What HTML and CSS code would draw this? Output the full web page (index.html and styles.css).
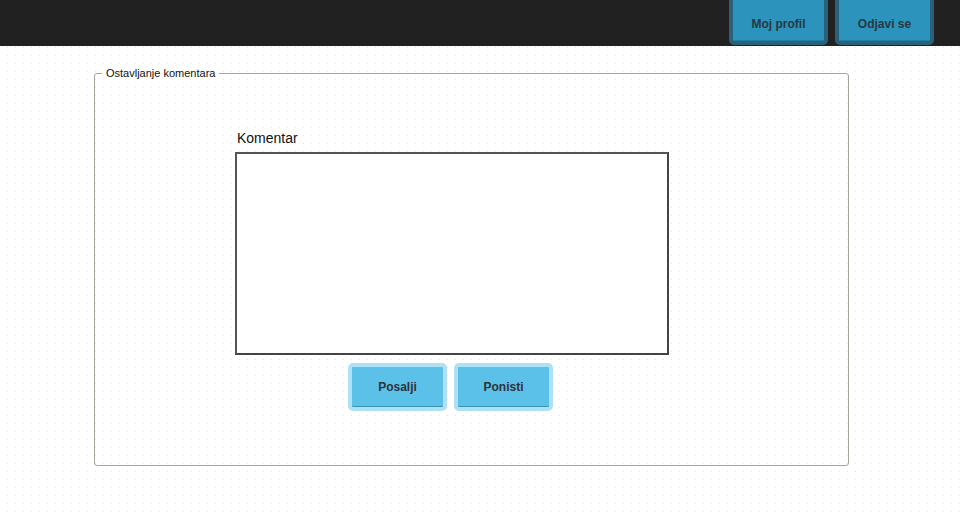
FILE: index.html
```html
<!DOCTYPE html>
<html lang="sr">
<head>
<meta charset="utf-8">
<title>Ostavljanje komentara</title>
<link rel="stylesheet" href="styles.css">
</head>
<body>
<header class="topbar">
  <button class="top-btn">Moj profil</button>
  <button class="top-btn">Odjavi se</button>
</header>
<main class="main">
  <section class="panel">
    <span class="legend">Ostavljanje komentara</span>
    <div class="form">
      <label class="label" for="k">Komentar</label>
      <textarea id="k" class="area"></textarea>
      <div class="actions">
        <button class="act-btn">Posalji</button>
        <button class="act-btn">Ponisti</button>
      </div>
    </div>
  </section>
</main>
</body>
</html>
```
FILE: styles.css
```css
html, body {
  margin: 0;
  padding: 0;
}
body {
  width: 960px;
  height: 516px;
  overflow: hidden;
  font-family: "Liberation Sans", Arial, sans-serif;
  background-color: #fff;
  background-image:
    linear-gradient(to right, #fff 7px, transparent 7px),
    linear-gradient(to bottom, #fff 7px, #e3e3e3 7px);
  background-size: 8px 8px, 8px 8px;
}
.topbar {
  height: 46px;
  background: #212121;
  display: flex;
  justify-content: flex-end;
  align-items: flex-end;
  gap: 7px;
  padding-right: 26px;
  overflow: hidden;
}
.top-btn {
  box-sizing: border-box;
  width: 99px;
  height: 50px;
  margin-bottom: 1px;
  border: 4px solid #2a6178;
  border-radius: 5px;
  background: #2b93bc;
  box-shadow: inset 0 -1px 0 #237ea3;
  color: #273841;
  font-family: "Liberation Sans", Arial, sans-serif;
  font-weight: bold;
  font-size: 12px;
  padding: 8px 0 0;
}
.main {
  padding: 73px 0 0 94px;
  margin-top: -46px;
}
.panel {
  position: relative;
  box-sizing: border-box;
  width: 755px;
  height: 393px;
  border: 1px solid #a7a596;
  border-radius: 3px;
}
.legend {
  position: absolute;
  top: -8px;
  left: 7px;
  padding: 0 4px;
  background: #fff;
  font-family: "Liberation Sans", Arial, sans-serif;
  font-size: 11px;
  line-height: 14px;
  color: #111;
}
.form {
  display: flex;
  flex-direction: column;
  align-items: flex-start;
  padding: 56px 0 0 140px;
}
.label {
  font-size: 14px;
  line-height: 16px;
  color: #111;
  padding-left: 2px;
  margin-bottom: 6px;
}
.area {
  box-sizing: border-box;
  width: 434px;
  height: 203px;
  margin: 0;
  border: 2px solid #444;
  border-top-color: #555;
  border-left-color: #555;
  background: #fff;
  resize: none;
  padding: 4px;
}
.actions {
  display: flex;
  gap: 7px;
  padding-left: 113px;
  margin-top: 8px;
}
.act-btn {
  box-sizing: border-box;
  width: 99px;
  height: 48px;
  border: 4px solid #aee1f4;
  border-radius: 5px;
  background: #5bc1e9;
  box-shadow: inset 0 -1px 0 #3a8fb5;
  color: #2d3338;
  font-family: "Liberation Sans", Arial, sans-serif;
  font-weight: bold;
  font-size: 12px;
  padding: 0;
}
```
